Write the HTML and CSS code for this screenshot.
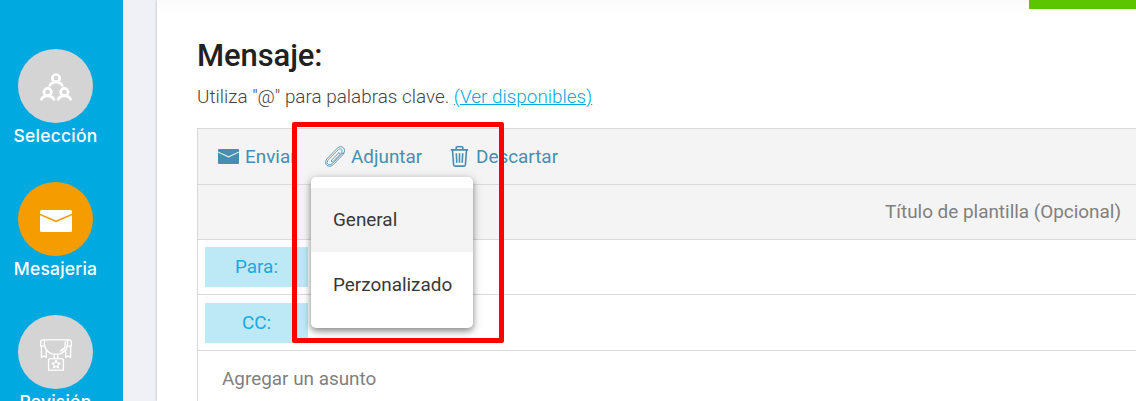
FILE: index.html
```html
<!DOCTYPE html>
<html lang="es">
<head>
<meta charset="utf-8">
<title>Mensaje</title>
<link rel="stylesheet" href="styles.css">
</head>
<body>
<div class="app">
  <nav class="sidebar">
    <a class="step">
      <span class="step-icon">
        <svg width="32" height="28" viewBox="0 0 32 28" fill="none" stroke="#fff" stroke-width="2.7" stroke-linecap="round">
          <circle cx="16" cy="5.2" r="3.7"/><path d="M9.8 12.4C12 7.9 20 7.9 22.2 12.4"/>
          <circle cx="7.6" cy="19" r="3.7"/><path d="M1.4 26.3C3.6 21.8 11.6 21.8 13.8 26.3"/>
          <circle cx="24.4" cy="19" r="3.7"/><path d="M18.2 26.3C20.4 21.8 28.4 21.8 30.6 26.3"/>
        </svg>
      </span>
      <span class="step-label">Selección</span>
    </a>
    <a class="step">
      <span class="step-icon active">
        <svg class="mail" width="32" height="22" viewBox="0 0 32 22" fill="#fff">
          <path d="M1.5 0h29Q32 0 32 1.5V3.6L16 10.4 0 3.6V1.5Q0 0 1.5 0Z"/>
          <path d="M0 5.300 16 12.200 32 5.300V20.500Q32 22 30.500 22h-29Q0 22 0 20.500Z"/>
        </svg>
      </span>
      <span class="step-label">Mesajeria</span>
    </a>
    <a class="step">
      <span class="step-icon">
        <svg class="trophy" width="32" height="32" viewBox="0 0 32 32" fill="none" stroke="#fff" stroke-width="1.3" stroke-linejoin="round" stroke-linecap="round">
          <path d="M4.400.8h23.200v4C27.600 10.500 23 14.700 18 15.200H14C9 14.700 4.400 10.500 4.400 4.800Z"/>
          <path d="M4.400.8H2.800Q.6.8.6 3v4.200h4.200M27.600.8h1.600q2.200 0 2.200 2.200v4.200h-4.200"/>
          <path d="M1.400 7.200v11.300l2.400-1.700 2.500 1.700v-8M30.600 7.200v11.300l-2.400-1.700-2.500 1.700v-8"/>
          <path d="M25.300 3v2.200c0 3-2 5.700-4.500 7.100M23.500 9.300l-2.700 2.200M14.200 15.300v4.300m3.600-4.300v4.300"/>
          <path d="M10.500 19.700h11q1.900 0 1.900 1.900v9.600H8.600v-9.600q0-1.900 1.900-1.900Z"/>
          <path d="m16 21.300 1.200 2.500 2.700.4-2 1.900.5 2.700-2.400-1.300-2.400 1.300.5-2.700-2-1.900 2.700-.4Z"/>
        </svg>
      </span>
      <span class="step-label">Revisión</span>
    </a>
  </nav>
  <main class="panel">
    <div class="green-button"></div>
    <h1 class="title">Mensaje:</h1>
    <p class="hint">Utiliza "@" para palabras clave. <a class="link">(Ver disponibles)</a></p>
    <section class="editor">
      <div class="row toolbar">
        <a class="tool tool-send">
          <svg width="21" height="15" viewBox="0 0 21 15" fill="#468fb0"><path d="M1 0h19q1 0 1 1v1.500L10.500 7.200 0 2.500V1q0-1 1-1Z"/><path d="M0 3.600 10.500 8.400 21 3.600V14q0 1-1 1H1q-1 0-1-1Z"/></svg>
          <span>Enviar</span>
        </a>
        <a class="tool tool-attach">
          <svg width="20" height="21" viewBox="0 0 20 21" fill="none" stroke="#468fb0" stroke-width=".85" stroke-linecap="round" stroke-linejoin="round"><path d="M13.800 6.700 6.700 14c-1.300 1.400.2 2.700 1.500 1.400l7.700-7.900c3.100-3.400-.5-6.200-3.400-3.200L3.400 13.600c-3.500 3.900.7 7.300 4.200 3.700L17.400 7.200"/><path d="m13.800 6.700.9.900M17.400 7.200l1.300.1M18.700 7.300C22 3.300 16.600-2.100 12.100 2.300L1.900 12.900C-2.200 18 3.800 23 8.400 18.500L18.700 7.800"/></svg>
          <span>Adjuntar</span>
        </a>
        <a class="tool tool-discard">
          <svg width="19" height="21" viewBox="0 0 19 21" fill="none" stroke="#468fb0" stroke-width="1.600" stroke-linejoin="round"><path d="M.8 3.900h17.400M6.200 3.700V1.500q0-.7.7-.7h5.200q.7 0 .7.700v2.200M2.500 4.200l1.100 14.600q.1 1.300 1.400 1.300h9q1.300 0 1.400-1.300L16.500 4.200"/><path d="m6.300 7.200.5 9.600M9.500 7.200v9.600M12.700 7.200l-.5 9.600"/></svg>
          <span>Descartar</span>
        </a>
      </div>
      <div class="row template"><span>Título de plantilla (Opcional)</span></div>
      <div class="row recipient"><span class="chip">Para:</span></div>
      <div class="row recipient cc"><span class="chip">CC:</span></div>
      <div class="subject">Agregar un asunto</div>
    </section>
  </main>
</div>
<div class="highlight"></div>
<div class="menu">
  <div class="menu-item selected">General</div>
  <div class="menu-item custom">Perzonalizado</div>
</div>
</body>
</html>
```
FILE: styles.css
```css
* { box-sizing: border-box; }
body { margin: 0; overflow: hidden; background: #f0f1f7; font-family: Roboto, sans-serif; }
.app { display: flex; height: 401px; overflow: hidden; }
.sidebar { width: 123px; flex: none; background: #00a9e0; padding-top: 49px; }
.step { display: block; width: 111px; height: 133px; text-align: center; }
.step-icon { display: flex; align-items: center; justify-content: center; width: 75px; height: 74px; margin: 0 auto; border-radius: 50%; background: #d4d4d4; }
.step-icon.active { background: #f59c00; }
.step-icon svg { display: block; margin-top: 2px; }
.step-icon .mail { margin-top: 4px; }
.step-icon .trophy { margin-top: 6px; }
.step-label { display: block; padding-top: 1px; color: #fff; font: 500 17.5px/24px Inter, sans-serif; letter-spacing: .2px; white-space: nowrap; }
.panel { flex: 1; margin-left: 34px; padding: 38px 0 0 40px; background: linear-gradient(#fbfbfb, #fff 14px); box-shadow: 0 0 3px rgba(0,0,0,.25); position: relative; }
.green-button { position: absolute; top: 0; right: 0; width: 107px; height: 9px; background: #5bc500; }
.title { margin: 0; font-size: 31px; line-height: 36px; font-weight: 500; letter-spacing: -.1px; color: #212121; }
.hint { margin: 11px 0 0; font-size: 18.9px; line-height: 24px; font-weight: 300; color: #444; white-space: nowrap; }
.link { color: #00a9e0; text-decoration: underline; }
.editor { margin-top: 19px; border: 1px solid #dadada; border-width: 1px 0 0 1px; font-size: 18.9px; white-space: nowrap; }
.row { display: flex; align-items: center; height: 55px; border-bottom: 1px solid #dadada; }
.toolbar { height: 56px; padding-left: 20px; background: #f4f4f4; color: #468fb0; }
.tool { display: flex; align-items: center; }
.tool-send { gap: 6px; width: 107px; }
.tool-attach { gap: 6px; width: 125px; }
.tool-discard { gap: 7px; }
.template { justify-content: flex-end; padding: 0 15px 1px 0; background: #f4f4f4; color: #808080; }
.recipient { padding-left: 7px; }
.cc { height: 56px; }
.chip { width: 103px; height: 40px; line-height: 40px; text-align: center; background: #bde8f6; color: #17abdf; }
.subject { padding-left: 24px; line-height: 55px; color: #808080; }
.highlight { position: absolute; left: 292px; top: 122px; width: 212px; height: 221px; border: 5px solid #f00; border-radius: 2px; }
.menu { position: absolute; left: 311px; top: 177px; width: 162px; height: 151px; padding-top: 11px; border-radius: 5px; background: #fff; box-shadow: 0 3px 6px rgba(0,0,0,.38), 0 2px 12px rgba(0,0,0,.16); color: #383838; font-size: 18.9px; overflow: hidden; }
.menu-item { height: 64px; padding-left: 22px; line-height: 64px; }
.menu-item.selected { background: #f4f4f4; }
.menu-item.custom { line-height: 65px; }
```
